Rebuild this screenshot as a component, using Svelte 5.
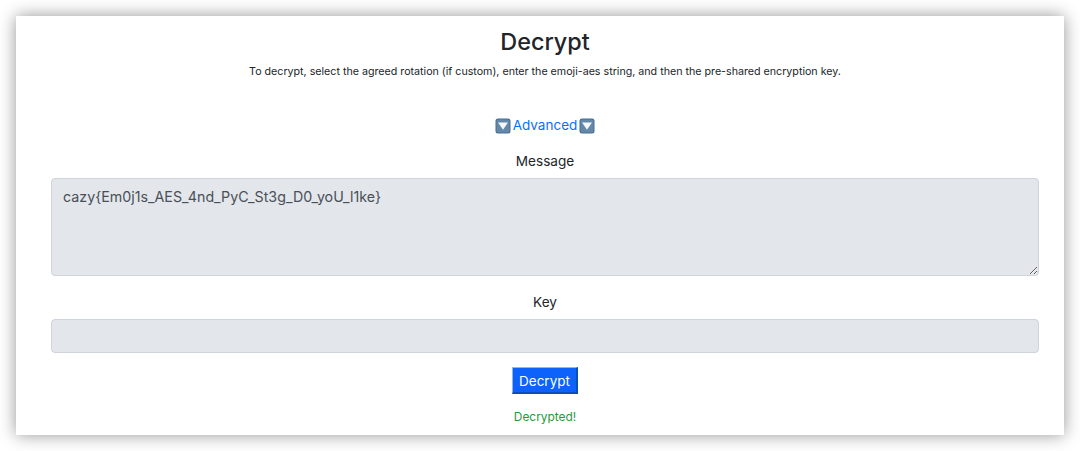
<script lang="ts">
  const message = 'cazy{Em0j1s_AES_4nd_PyC_St3g_D0_yoU_l1ke}'
</script>

{#snippet downArrow()}
  <svg class="emoji" viewBox="0 0 16 16" aria-hidden="true">
    <rect x="0.5" y="0.5" width="15" height="15" rx="2.5" fill="#4a6c8e" />
    <rect x="1.5" y="1.5" width="13" height="13" rx="1.5" fill="#6388aa" />
    <path d="M3 4.6h10L8 11.8z" fill="#f4f8fb" />
  </svg>
{/snippet}

<main class="card">
  <h1>Decrypt</h1>
  <p class="lead">
    To decrypt, select the agreed rotation (if custom), enter the emoji-aes string, and then the
    pre-shared encryption key.
  </p>

  <div class="advanced">
    {@render downArrow()}
    <a href="#advanced">Advanced</a>
    {@render downArrow()}
  </div>

  <label for="message">Message</label>
  <textarea id="message" disabled value={message}></textarea>

  <label class="key-label" for="key">Key</label>
  <input id="key" type="text" disabled />

  <button type="button">Decrypt</button>

  <p class="status">Decrypted!</p>
</main>

<style>
  :global(body) {
    background: #fff;
    overflow: hidden;
  }
  .card {
    box-sizing: border-box;
    width: 1048px;
    height: 419px;
    margin: 16px;
    padding: 0 25px 0 35px;
    display: flex;
    flex-direction: column;
    align-items: center;
    background: #fff;
    color: #212529;
    font-family: Inter, 'Liberation Sans', sans-serif;
    box-shadow: 0 0 16px rgba(0, 0, 0, 0.42);
  }
  h1 {
    margin: 10px 0 0;
    font-size: 23.4px;
    line-height: 32px;
    font-weight: 500;
  }
  .lead {
    margin: 6px 0 0;
    font-size: 10.68px;
    line-height: 16px;
    color: #212529;
  }
  .advanced {
    margin-top: 35px;
    display: flex;
    align-items: center;
    gap: 2px;
    font-size: 13.5px;
    line-height: 21px;
  }
  .emoji {
    width: 16px;
    height: 16px;
  }
  a {
    color: #0d6efd;
    text-decoration: none;
  }
  label {
    margin-top: 15px;
    font-size: 13.6px;
    line-height: 21px;
  }
  textarea,
  input {
    box-sizing: border-box;
    width: 100%;
    display: block;
    margin: 6px 0 0;
    border: 1px solid #ced4da;
    border-radius: 4px;
    background: #e3e6eb;
    color: #495057;
    opacity: 1;
    font-family: inherit;
    font-size: 14.25px;
  }
  textarea {
    height: 98px;
    padding: 8px 11px;
    line-height: 20px;
    resize: vertical;
  }
  .key-label {
    margin-top: 16px;
  }
  input {
    height: 34px;
  }
  button {
    margin-top: 14px;
    height: 27px;
    padding: 1px 6px 0;
    border: 1px solid #0b5ed7;
    border-bottom-width: 2px;
    border-right-width: 2px;
    border-color: #8fb6ee #0a4eb8 #0a4eb8 #8fb6ee;
    background: #0d62fb;
    color: #fff;
    font-family: inherit;
    font-size: 13.5px;
  }
  .status {
    margin: 14px 0 0;
    font-size: 11.9px;
    line-height: 18px;
    color: #1f9a36;
  }
</style>
